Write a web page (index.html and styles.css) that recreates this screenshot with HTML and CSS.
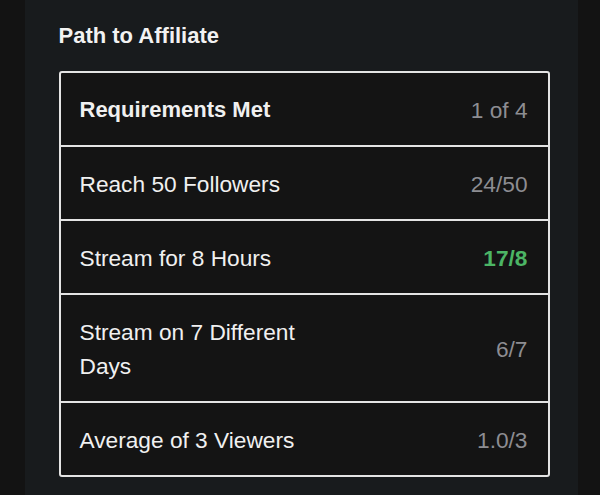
FILE: index.html
```html
<!DOCTYPE html>
<html>
<head>
<meta charset="utf-8">
<link rel="stylesheet" href="styles.css">
</head>
<body>
<div class="page">
  <section class="panel">
    <h2 class="title">Path to Affiliate</h2>
    <div class="table">
      <div class="row head"><span class="label">Requirements Met</span><span class="value">1 of 4</span></div>
      <div class="row"><span class="label">Reach 50 Followers</span><span class="value">24/50</span></div>
      <div class="row"><span class="label">Stream for 8 Hours</span><span class="value done">17/8</span></div>
      <div class="row"><span class="label narrow">Stream on 7 Different Days</span><span class="value">6/7</span></div>
      <div class="row"><span class="label">Average of 3 Viewers</span><span class="value">1.0/3</span></div>
    </div>
  </section>
</div>
</body>
</html>
```
FILE: styles.css
```css
html, body {
  margin: 0;
  padding: 0;
  background: #131313;
  font-family: "Liberation Sans", Arial, sans-serif;
  color: #f0f0f0;
}
.page {
  width: 600px;
  height: 495px;
  overflow: hidden;
  display: flex;
  justify-content: center;
}
.panel {
  width: 553px;
  margin-left: 2px;
  background: #181b1d;
  padding: 21px 0 0 34px;
  box-sizing: border-box;
}
.title {
  margin: 0;
  font-size: 22px;
  font-weight: 700;
  line-height: 30px;
  color: #f2f2f2;
}
.table {
  margin-top: 20px;
  width: 491px;
  box-sizing: border-box;
  border: 2px solid #e4e4e4;
  border-radius: 3px;
  background: #141414;
}
.row {
  display: flex;
  justify-content: space-between;
  align-items: center;
  padding: 20px 20px 18px 19px;
  font-size: 22.7px;
  line-height: 34px;
  border-bottom: 2px solid #e4e4e4;
}
.row:last-child {
  border-bottom: none;
}
.head .label {
  font-weight: 700;
  font-size: 22px;
}
.label.narrow {
  width: 240px;
}
.value {
  color: #8d8d92;
}
.done {
  color: #4cb565;
  font-weight: 700;
}
```
